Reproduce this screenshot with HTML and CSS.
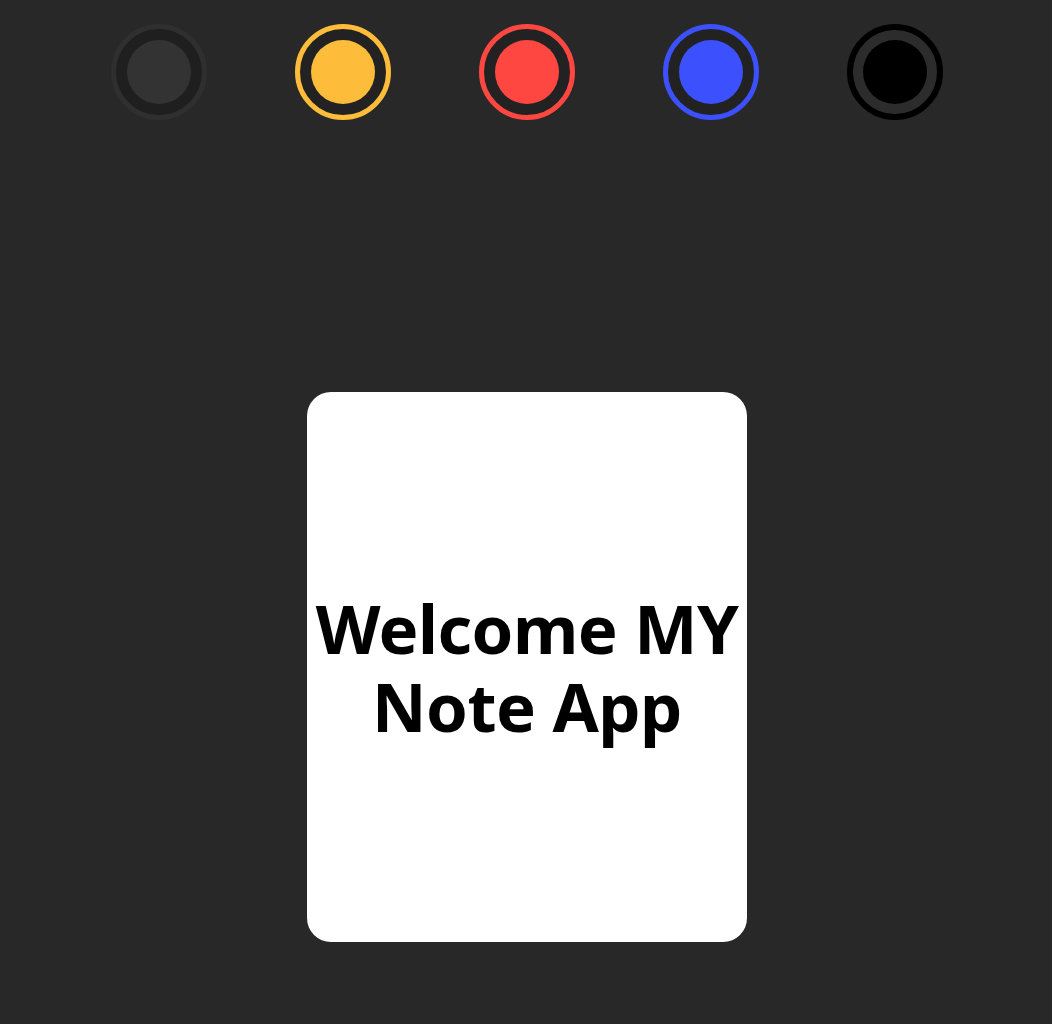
FILE: index.html
```html
<!DOCTYPE html>
<html lang="en">
<head>
<meta charset="utf-8">
<title>Note App</title>
<link rel="stylesheet" href="styles.css">
</head>
<body>
  <div class="colors">
    <button class="swatch swatch-gray"><span class="dot"></span></button>
    <button class="swatch swatch-yellow"><span class="dot"></span></button>
    <button class="swatch swatch-red"><span class="dot"></span></button>
    <button class="swatch swatch-blue"><span class="dot"></span></button>
    <button class="swatch swatch-black"><span class="dot"></span></button>
  </div>
  <main class="stage">
    <div class="card">
      <h1 class="title">Welcome MY Note App</h1>
    </div>
  </main>
</body>
</html>
```

FILE: styles.css
```css
html, body {
  margin: 0;
  padding: 0;
  height: 100%;
}
body {
  background: #282828;
  font-family: "Noto Sans", "Open Sans", sans-serif;
  display: flex;
  flex-direction: column;
  align-items: center;
  padding-left: 2px;
  box-sizing: border-box;
}
.colors {
  display: flex;
  gap: 88px;
  padding-top: 24px;
}
.swatch {
  width: 96px;
  height: 96px;
  box-sizing: border-box;
  border-radius: 50%;
  border: 5px solid;
  padding: 0;
  background: #202020;
  display: flex;
  align-items: center;
  justify-content: center;
  cursor: pointer;
}
.dot {
  width: 64px;
  height: 64px;
  border-radius: 50%;
}
.swatch-gray { border-color: #2f2f2f; background: #1f1f1f; }
.swatch-gray .dot { background: #333333; }
.swatch-yellow { border-color: #fdbd3a; background: #222222; }
.swatch-yellow .dot { background: #fdbd3a; }
.swatch-red { border-color: #ff4742; background: #222222; }
.swatch-red .dot { background: #ff4742; }
.swatch-blue { border-color: #3c50fd; background: #222222; }
.swatch-blue .dot { background: #3c50fd; }
.swatch-black { border-color: #000000; border-width: 6px; background: #2c2c2c; }
.swatch-black .dot { background: #000000; }
.stage {
  padding-top: 272px;
}
.card {
  width: 440px;
  height: 550px;
  background: #ffffff;
  border-radius: 24px;
  display: flex;
  align-items: center;
  justify-content: center;
}
.title {
  margin: 0;
  text-align: center;
  font-size: 67px;
  line-height: 78px;
  font-weight: 700;
  color: #000;
  letter-spacing: -0.5px;
}
```
